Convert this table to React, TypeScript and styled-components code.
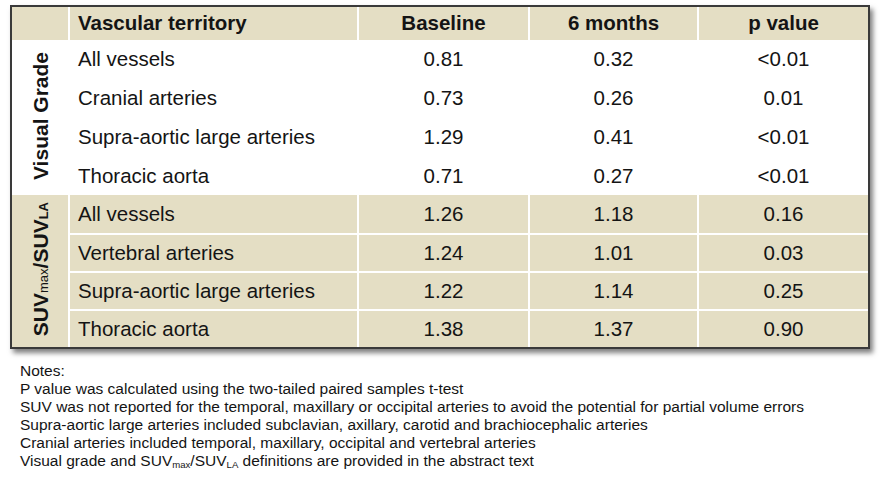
import styled, { createGlobalStyle } from "styled-components";

const GlobalStyle = createGlobalStyle`
  html, body {
    margin: 0;
    padding: 0;
    background: #ffffff;
  }
  body {
    font-family: "Liberation Sans", Arial, Helvetica, sans-serif;
    color: #141414;
  }
`;

type Row = { territory: string; baseline: string; month6: string; p: string };

const visualRows: Row[] = [
    { territory: "All vessels", baseline: "0.81", month6: "0.32", p: "<0.01" },
    { territory: "Cranial arteries", baseline: "0.73", month6: "0.26", p: "0.01" },
    { territory: "Supra-aortic large arteries", baseline: "1.29", month6: "0.41", p: "<0.01" },
    { territory: "Thoracic aorta", baseline: "0.71", month6: "0.27", p: "<0.01" }
];

const suvRows: Row[] = [
    { territory: "All vessels", baseline: "1.26", month6: "1.18", p: "0.16" },
    { territory: "Vertebral arteries", baseline: "1.24", month6: "1.01", p: "0.03" },
    { territory: "Supra-aortic large arteries", baseline: "1.22", month6: "1.14", p: "0.25" },
    { territory: "Thoracic aorta", baseline: "1.38", month6: "1.37", p: "0.90" }
];

const colWidths = [56, 289, 171, 169, 171];

export const App = () => {
    return (
        <>
            <GlobalStyle />
            <Page>
                <Table>
                    <colgroup>
                        {colWidths.map((w, i) => (
                            <Col key={i} $width={w} />
                        ))}
                    </colgroup>
                    <thead>
                        <HeadRow>
                            <HeadCell $first />
                            <HeadCell $align="left">Vascular territory</HeadCell>
                            <HeadCell>Baseline</HeadCell>
                            <HeadCell>6 months</HeadCell>
                            <HeadCell>p value</HeadCell>
                        </HeadRow>
                    </thead>
                    <tbody>
                        {visualRows.map((row, index) => (
                            <BodyRow key={row.territory} $tone="white" $height={index === 3 ? 38 : 39}>
                                {index === 0 && (
                                    <GroupCell rowSpan={4} $tone="white">
                                        <GroupLabel>Visual Grade</GroupLabel>
                                    </GroupCell>
                                )}
                                <TerritoryCell $divider={false}>{row.territory}</TerritoryCell>
                                <ValueCell $divider={false}>{row.baseline}</ValueCell>
                                <ValueCell $divider={false}>{row.month6}</ValueCell>
                                <ValueCell $divider={false}>{row.p}</ValueCell>
                            </BodyRow>
                        ))}
                        {suvRows.map((row, index) => (
                            <BodyRow key={row.territory} $tone="tan" $height={38}>
                                {index === 0 && (
                                    <GroupCell rowSpan={4} $tone="tan">
                                        <GroupLabel>
                                            SUV<Sub $light>max</Sub>/SUV<Sub>LA</Sub>
                                        </GroupLabel>
                                    </GroupCell>
                                )}
                                <TerritoryCell $divider={index > 0}>{row.territory}</TerritoryCell>
                                <ValueCell $divider={index > 0}>{row.baseline}</ValueCell>
                                <ValueCell $divider={index > 0}>{row.month6}</ValueCell>
                                <ValueCell $divider={index > 0}>{row.p}</ValueCell>
                            </BodyRow>
                        ))}
                    </tbody>
                </Table>

                <Notes>
                    <NoteLine>Notes:</NoteLine>
                    <NoteLine>P value was calculated using the two-tailed paired samples t-test</NoteLine>
                    <NoteLine>
                        SUV was not reported for the temporal, maxillary or occipital arteries to avoid the potential for partial volume errors
                    </NoteLine>
                    <NoteLine>Supra-aortic large arteries included subclavian, axillary, carotid and brachiocephalic arteries</NoteLine>
                    <NoteLine>Cranial arteries included temporal, maxillary, occipital and vertebral arteries</NoteLine>
                    <NoteLine>
                        Visual grade and SUV<NoteSub>max</NoteSub>/SUV<NoteSub>LA</NoteSub> definitions are provided in the abstract text
                    </NoteLine>
                </Notes>
            </Page>
        </>
    );
};

const tan = "#e4dec4";

const Page = styled.div`
    width: 886px;
    height: 485px;
    padding: 5px 0 0 10px;
    box-sizing: border-box;
    overflow: hidden;
`;

const Table = styled.table`
    width: 860px;
    table-layout: fixed;
    border-collapse: separate;
    border-spacing: 0;
    border: 2px solid #3a3a3a;
    box-shadow: 3px 4px 5px rgba(0, 0, 0, 0.5);
    font-size: 20.5px;
    line-height: 1;
`;

const Col = styled.col<{ $width: number }>`
    width: ${(p) => p.$width}px;
`;

const HeadRow = styled.tr`
    height: 33px;
    background: ${tan};
`;

const HeadCell = styled.th<{ $align?: "left" | "center"; $first?: boolean }>`
    padding: 0;
    padding-left: ${(p) => (p.$align === "left" ? "8px" : "0")};
    text-align: ${(p) => p.$align ?? "center"};
    font-weight: bold;
    border-left: ${(p) => (p.$first ? "none" : "2px solid #ffffff")};
    vertical-align: middle;
`;

const BodyRow = styled.tr<{ $tone: "white" | "tan"; $height: number }>`
    height: ${(p) => p.$height}px;
    background: ${(p) => (p.$tone === "tan" ? tan : "#ffffff")};
`;

const GroupCell = styled.td<{ $tone: "white" | "tan" }>`
    padding: 0;
    text-align: center;
    vertical-align: middle;
    background: ${(p) => (p.$tone === "tan" ? tan : "#ffffff")};
`;

const GroupLabel = styled.div`
    display: inline-block;
    writing-mode: vertical-rl;
    transform: rotate(180deg);
    font-weight: bold;
    font-size: 21px;
    white-space: nowrap;
`;

const Sub = styled.sub<{ $light?: boolean }>`
    font-size: 0.62em;
    font-weight: ${(p) => (p.$light ? "normal" : "bold")};
    line-height: 0;
    vertical-align: -0.2em;
`;

const TerritoryCell = styled.td<{ $divider: boolean }>`
    padding: 0 0 0 8px;
    text-align: left;
    vertical-align: middle;
    border-left: 2px solid #ffffff;
    border-top: ${(p) => (p.$divider ? "2px solid #ffffff" : "none")};
    white-space: nowrap;
`;

const ValueCell = styled.td<{ $divider: boolean }>`
    padding: 0;
    text-align: center;
    vertical-align: middle;
    border-left: 2px solid #ffffff;
    border-top: ${(p) => (p.$divider ? "2px solid #ffffff" : "none")};
`;

const Notes = styled.div`
    margin: 13px 0 0 10px;
    font-size: 15.5px;
    line-height: 18.1px;
    color: #141414;
`;

const NoteLine = styled.div`
    white-space: nowrap;
`;

const NoteSub = styled.sub`
    font-size: 0.62em;
    line-height: 0;
    vertical-align: -0.25em;
`;

export default App;
